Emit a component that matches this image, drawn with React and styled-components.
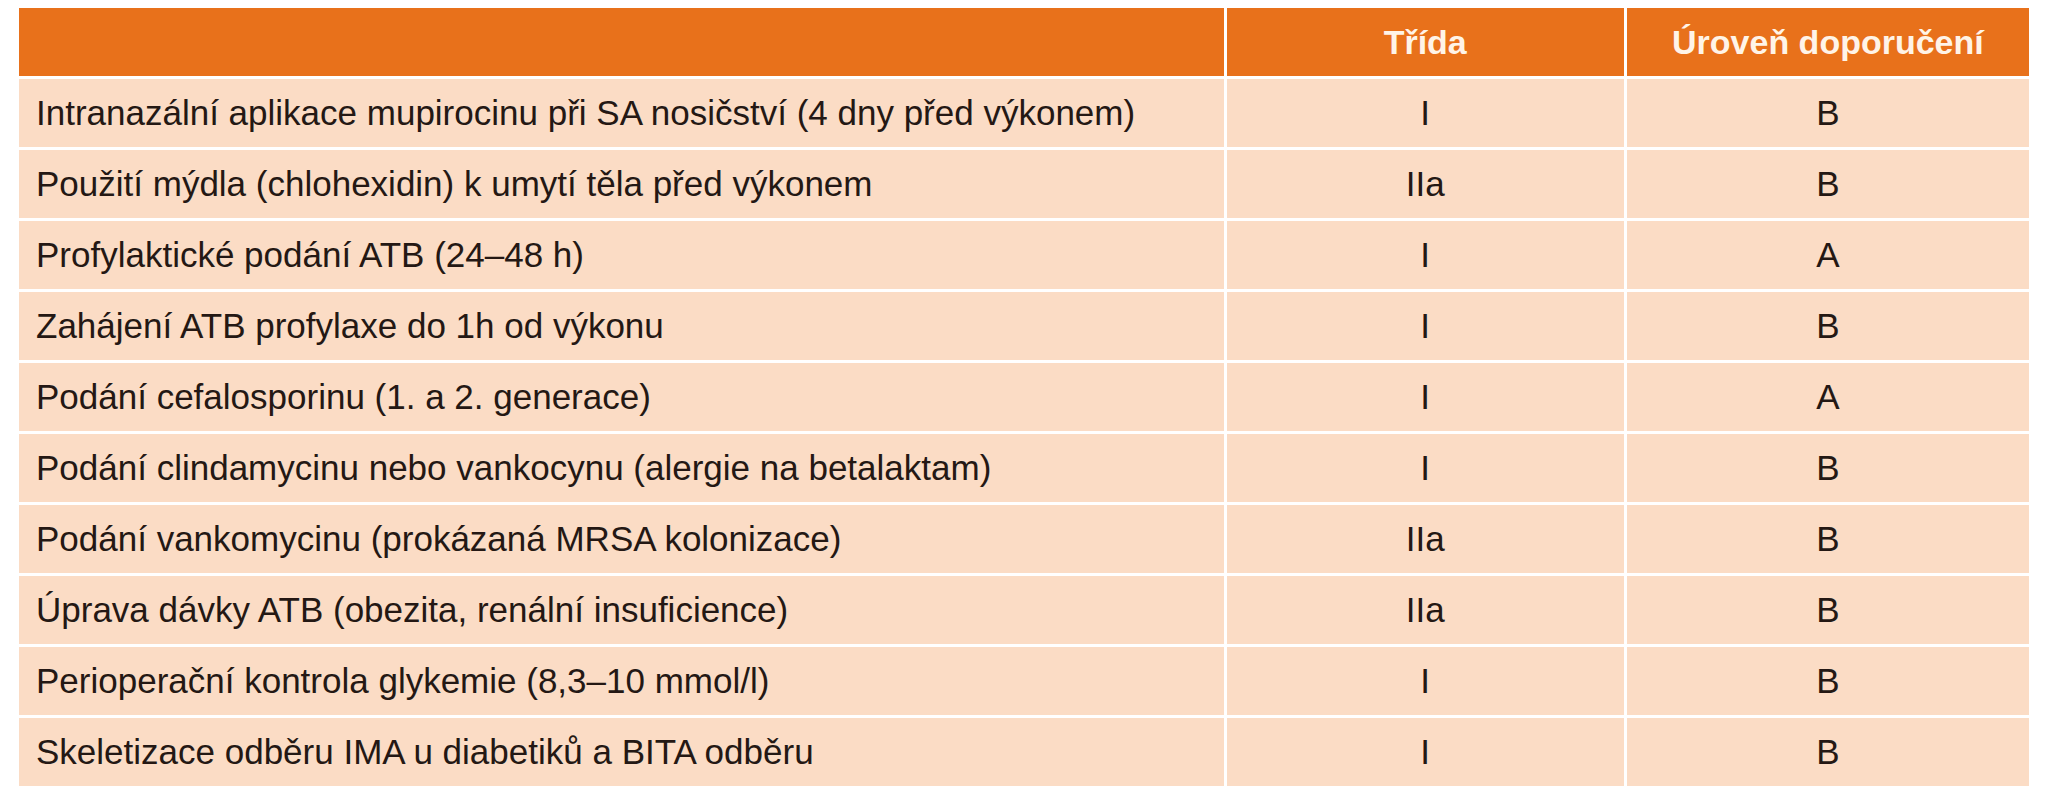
import React from "react";
import styled, { createGlobalStyle } from "styled-components";

const GlobalStyle = createGlobalStyle`
  html, body {
    margin: 0;
    padding: 0;
    background: #ffffff;
  }
  body {
    font-family: "Liberation Sans", Arial, sans-serif;
  }
`;

const Page = styled.div`
  padding: 5px 0 0 16px;
`;

const Table = styled.table`
  border-collapse: separate;
  border-spacing: 3px;
  width: 2016px;
  table-layout: fixed;
  color: #241814;
  font-size: 35px;
`;

const HeadCell = styled.th`
  background: #e8711b;
  color: #fff4e8;
  font-weight: 700;
  font-size: 34px;
  height: 68px;
  padding: 0;
  text-align: center;
  vertical-align: middle;
`;

const Cell = styled.td`
  background: #fbdcc5;
  height: 68px;
  padding: ${({ $label }) => ($label ? "0 0 0 17px" : "0")};
  text-align: ${({ $label }) => ($label ? "left" : "center")};
  vertical-align: middle;
  white-space: nowrap;
`;

const rows = [
  ["Intranazální aplikace mupirocinu při SA nosičství (4 dny před výkonem)", "I", "B"],
  ["Použití mýdla (chlohexidin) k umytí těla před výkonem", "IIa", "B"],
  ["Profylaktické podání ATB (24–48 h)", "I", "A"],
  ["Zahájení ATB profylaxe do 1h od výkonu", "I", "B"],
  ["Podání cefalosporinu (1. a 2. generace)", "I", "A"],
  ["Podání clindamycinu nebo vankocynu (alergie na betalaktam)", "I", "B"],
  ["Podání vankomycinu (prokázaná MRSA kolonizace)", "IIa", "B"],
  ["Úprava dávky ATB (obezita, renální insuficience)", "IIa", "B"],
  ["Perioperační kontrola glykemie (8,3–10 mmol/l)", "I", "B"],
  ["Skeletizace odběru IMA u diabetiků a BITA odběru", "I", "B"],
];

export default function App() {
  return (
    <Page>
      <GlobalStyle />
      <Table>
        <colgroup>
          <col style={{ width: "1204px" }} />
          <col style={{ width: "397px" }} />
          <col style={{ width: "402px" }} />
        </colgroup>
        <thead>
          <tr>
            <HeadCell />
            <HeadCell>Třída</HeadCell>
            <HeadCell>Úroveň doporučení</HeadCell>
          </tr>
        </thead>
        <tbody>
          {rows.map(([label, cls, level]) => (
            <tr key={label}>
              <Cell $label>{label}</Cell>
              <Cell>{cls}</Cell>
              <Cell>{level}</Cell>
            </tr>
          ))}
        </tbody>
      </Table>
    </Page>
  );
}
